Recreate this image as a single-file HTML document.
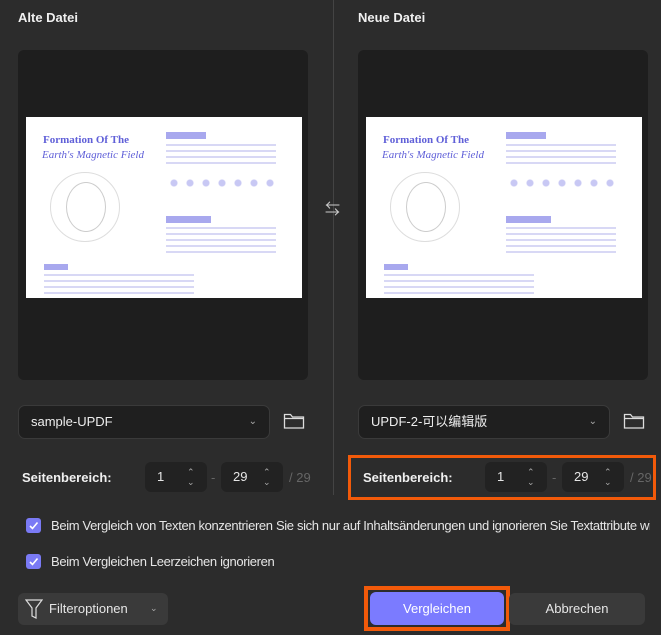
<!DOCTYPE html>
<html><head><meta charset="utf-8"><style>
*{box-sizing:border-box;margin:0;padding:0}
body{width:661px;height:635px;background:#2c2c2c;font-family:"Liberation Sans","Noto Sans CJK SC",sans-serif;color:#e6e6e6;position:relative;overflow:hidden;font-size:13px}
.a{position:absolute}
.h{font-weight:bold;font-size:13px;color:#f0f0f0}
.prev{background:#1e1e1e;border-radius:6px}
.page{background:#fff}
.dd{background:#1f1f1f;border:1px solid #3a3a3a;border-radius:7px;padding:0 12px;line-height:32px;font-size:13px;color:#eee}
.inp{background:#222;border-radius:6px;height:30px;line-height:30px;padding-left:12px;font-size:13px}
.muted{color:#666}
.cb{width:15px;height:15px;background:#7a7af5;border-radius:3px}
.btn{border-radius:6px;text-align:center;line-height:31px;font-size:13px}
.pt{color:#6060d8;font-family:"Liberation Serif",serif;font-weight:bold}
</style></head><body>
<div class="a h" style="left:18px;top:10px">Alte Datei</div>
<div class="a h" style="left:358px;top:10px">Neue Datei</div>
<div class="a" style="left:333px;top:0;width:1px;height:495px;background:#444"></div>
<div class="a" style="left:325px;top:198px;color:#ccc;font-size:15px">⇆</div>

<div class="a prev" style="left:18px;top:50px;width:290px;height:330px"></div>
<div class="a prev" style="left:358px;top:50px;width:290px;height:330px"></div>

<div class="a page" style="left:26px;top:117px;width:276px;height:181px">
 <div class="a pt" style="left:17px;top:17px;font-size:11px">Formation Of The</div>
 <div class="a pt" style="left:16px;top:32px;font-size:11px;font-style:italic;font-weight:normal">Earth's Magnetic Field</div>
 <div class="a" style="left:140px;top:15px;width:40px;height:7px;background:#a8a8ee"></div>
 <div class="a" style="left:140px;top:27px;width:110px;height:22px;background:repeating-linear-gradient(#d8d8f5 0 2px,transparent 2px 6px)"></div>
 <div class="a" style="left:24px;top:55px;width:70px;height:70px;border-radius:50%;border:1px solid #ddd"></div>
 <div class="a" style="left:40px;top:65px;width:40px;height:50px;border-radius:50%;border:1px solid #ccc"></div>
 <div class="a" style="left:140px;top:61px;width:115px;height:10px;background:radial-gradient(circle,#c8c8f4 3px,transparent 4px) 0 0/16px 10px"></div>
 <div class="a" style="left:140px;top:99px;width:45px;height:7px;background:#a8a8ee"></div>
 <div class="a" style="left:140px;top:110px;width:110px;height:26px;background:repeating-linear-gradient(#d8d8f5 0 2px,transparent 2px 6px)"></div>
 <div class="a" style="left:18px;top:147px;width:24px;height:6px;background:#a8a8ee"></div>
 <div class="a" style="left:18px;top:157px;width:150px;height:20px;background:repeating-linear-gradient(#d8d8f5 0 2px,transparent 2px 6px)"></div>
</div>
<div class="a page" style="left:366px;top:117px;width:276px;height:181px">
 <div class="a pt" style="left:17px;top:17px;font-size:11px">Formation Of The</div>
 <div class="a pt" style="left:16px;top:32px;font-size:11px;font-style:italic;font-weight:normal">Earth's Magnetic Field</div>
 <div class="a" style="left:140px;top:15px;width:40px;height:7px;background:#a8a8ee"></div>
 <div class="a" style="left:140px;top:27px;width:110px;height:22px;background:repeating-linear-gradient(#d8d8f5 0 2px,transparent 2px 6px)"></div>
 <div class="a" style="left:24px;top:55px;width:70px;height:70px;border-radius:50%;border:1px solid #ddd"></div>
 <div class="a" style="left:40px;top:65px;width:40px;height:50px;border-radius:50%;border:1px solid #ccc"></div>
 <div class="a" style="left:140px;top:61px;width:115px;height:10px;background:radial-gradient(circle,#c8c8f4 3px,transparent 4px) 0 0/16px 10px"></div>
 <div class="a" style="left:140px;top:99px;width:45px;height:7px;background:#a8a8ee"></div>
 <div class="a" style="left:140px;top:110px;width:110px;height:26px;background:repeating-linear-gradient(#d8d8f5 0 2px,transparent 2px 6px)"></div>
 <div class="a" style="left:18px;top:147px;width:24px;height:6px;background:#a8a8ee"></div>
 <div class="a" style="left:18px;top:157px;width:150px;height:20px;background:repeating-linear-gradient(#d8d8f5 0 2px,transparent 2px 6px)"></div>
</div>

<div class="a dd" style="left:18px;top:405px;width:252px;height:34px">sample-UPDF<span style="float:right;color:#aaa;font-size:10px">⌄</span></div>
<div class="a dd" style="left:358px;top:405px;width:252px;height:34px">UPDF-2-可以编辑版<span style="float:right;color:#aaa;font-size:10px">⌄</span></div>
<svg class="a" style="left:283px;top:412px" width="22" height="18" viewBox="0 0 22 18"><path d="M1.5 2.5h6l2 2.5h11v11h-19z M1.5 6.5h19" fill="none" stroke="#ddd" stroke-width="1.3"/></svg>
<svg class="a" style="left:623px;top:412px" width="22" height="18" viewBox="0 0 22 18"><path d="M1.5 2.5h6l2 2.5h11v11h-19z M1.5 6.5h19" fill="none" stroke="#ddd" stroke-width="1.3"/></svg>

<div class="a h" style="left:22px;top:470px">Seitenbereich:</div>
<div class="a inp" style="left:145px;top:462px;width:62px">1<span class="a" style="left:42px;font-size:9px;color:#aaa;line-height:10px;top:5px">⌃<br>⌄</span></div>
<div class="a muted" style="left:211px;top:470px">-</div>
<div class="a inp" style="left:221px;top:462px;width:62px">29<span class="a" style="left:42px;font-size:9px;color:#aaa;line-height:10px;top:5px">⌃<br>⌄</span></div>
<div class="a muted" style="left:289px;top:470px">/ 29</div>

<div class="a" style="left:348px;top:455px;width:308px;height:45px;border:3px solid #f25a0a"></div>
<div class="a h" style="left:363px;top:470px">Seitenbereich:</div>
<div class="a inp" style="left:485px;top:462px;width:62px">1<span class="a" style="left:42px;font-size:9px;color:#aaa;line-height:10px;top:5px">⌃<br>⌄</span></div>
<div class="a muted" style="left:552px;top:470px">-</div>
<div class="a inp" style="left:562px;top:462px;width:62px">29<span class="a" style="left:42px;font-size:9px;color:#aaa;line-height:10px;top:5px">⌃<br>⌄</span></div>
<div class="a muted" style="left:630px;top:470px;width:23px;overflow:hidden;white-space:nowrap">/ 29</div>

<div class="a cb" style="left:26px;top:518px"></div>
<svg class="a" style="left:26px;top:518px" width="15" height="15"><path d="M4 8l2.5 2.5 5-6" fill="none" stroke="#fff" stroke-width="1.6"/></svg>
<div class="a" style="left:51px;top:518px;width:599px;overflow:hidden;white-space:nowrap;letter-spacing:-0.35px">Beim Vergleich von Texten konzentrieren Sie sich nur auf Inhaltsänderungen und ignorieren Sie Textattribute wie Sc</div>
<div class="a cb" style="left:26px;top:554px"></div>
<svg class="a" style="left:26px;top:554px" width="15" height="15"><path d="M4 8l2.5 2.5 5-6" fill="none" stroke="#fff" stroke-width="1.6"/></svg>
<div class="a" style="left:51px;top:554px;letter-spacing:-0.35px">Beim Vergleichen Leerzeichen ignorieren</div>

<div class="a btn" style="left:18px;top:593px;width:150px;height:32px;background:#3a3a3a;text-align:left;padding-left:31px">Filteroptionen<span style="position:absolute;left:132px;color:#aaa;font-size:9px">⌄</span></div>
<svg class="a" style="left:25px;top:599px" width="18" height="20" viewBox="0 0 18 20"><path d="M1 1h16l-6 8v10l-4-2v-8z" fill="none" stroke="#ddd" stroke-width="1.2"/></svg>
<div class="a" style="left:364px;top:586px;width:146px;height:45px;border:4px solid #f25a0a"></div>
<div class="a btn" style="left:370px;top:592px;width:134px;height:33px;line-height:33px;background:#7b7bff;color:#fff">Vergleichen</div>
<div class="a btn" style="left:509px;top:593px;width:136px;height:32px;background:#3a3a3a">Abbrechen</div>
</body></html>
